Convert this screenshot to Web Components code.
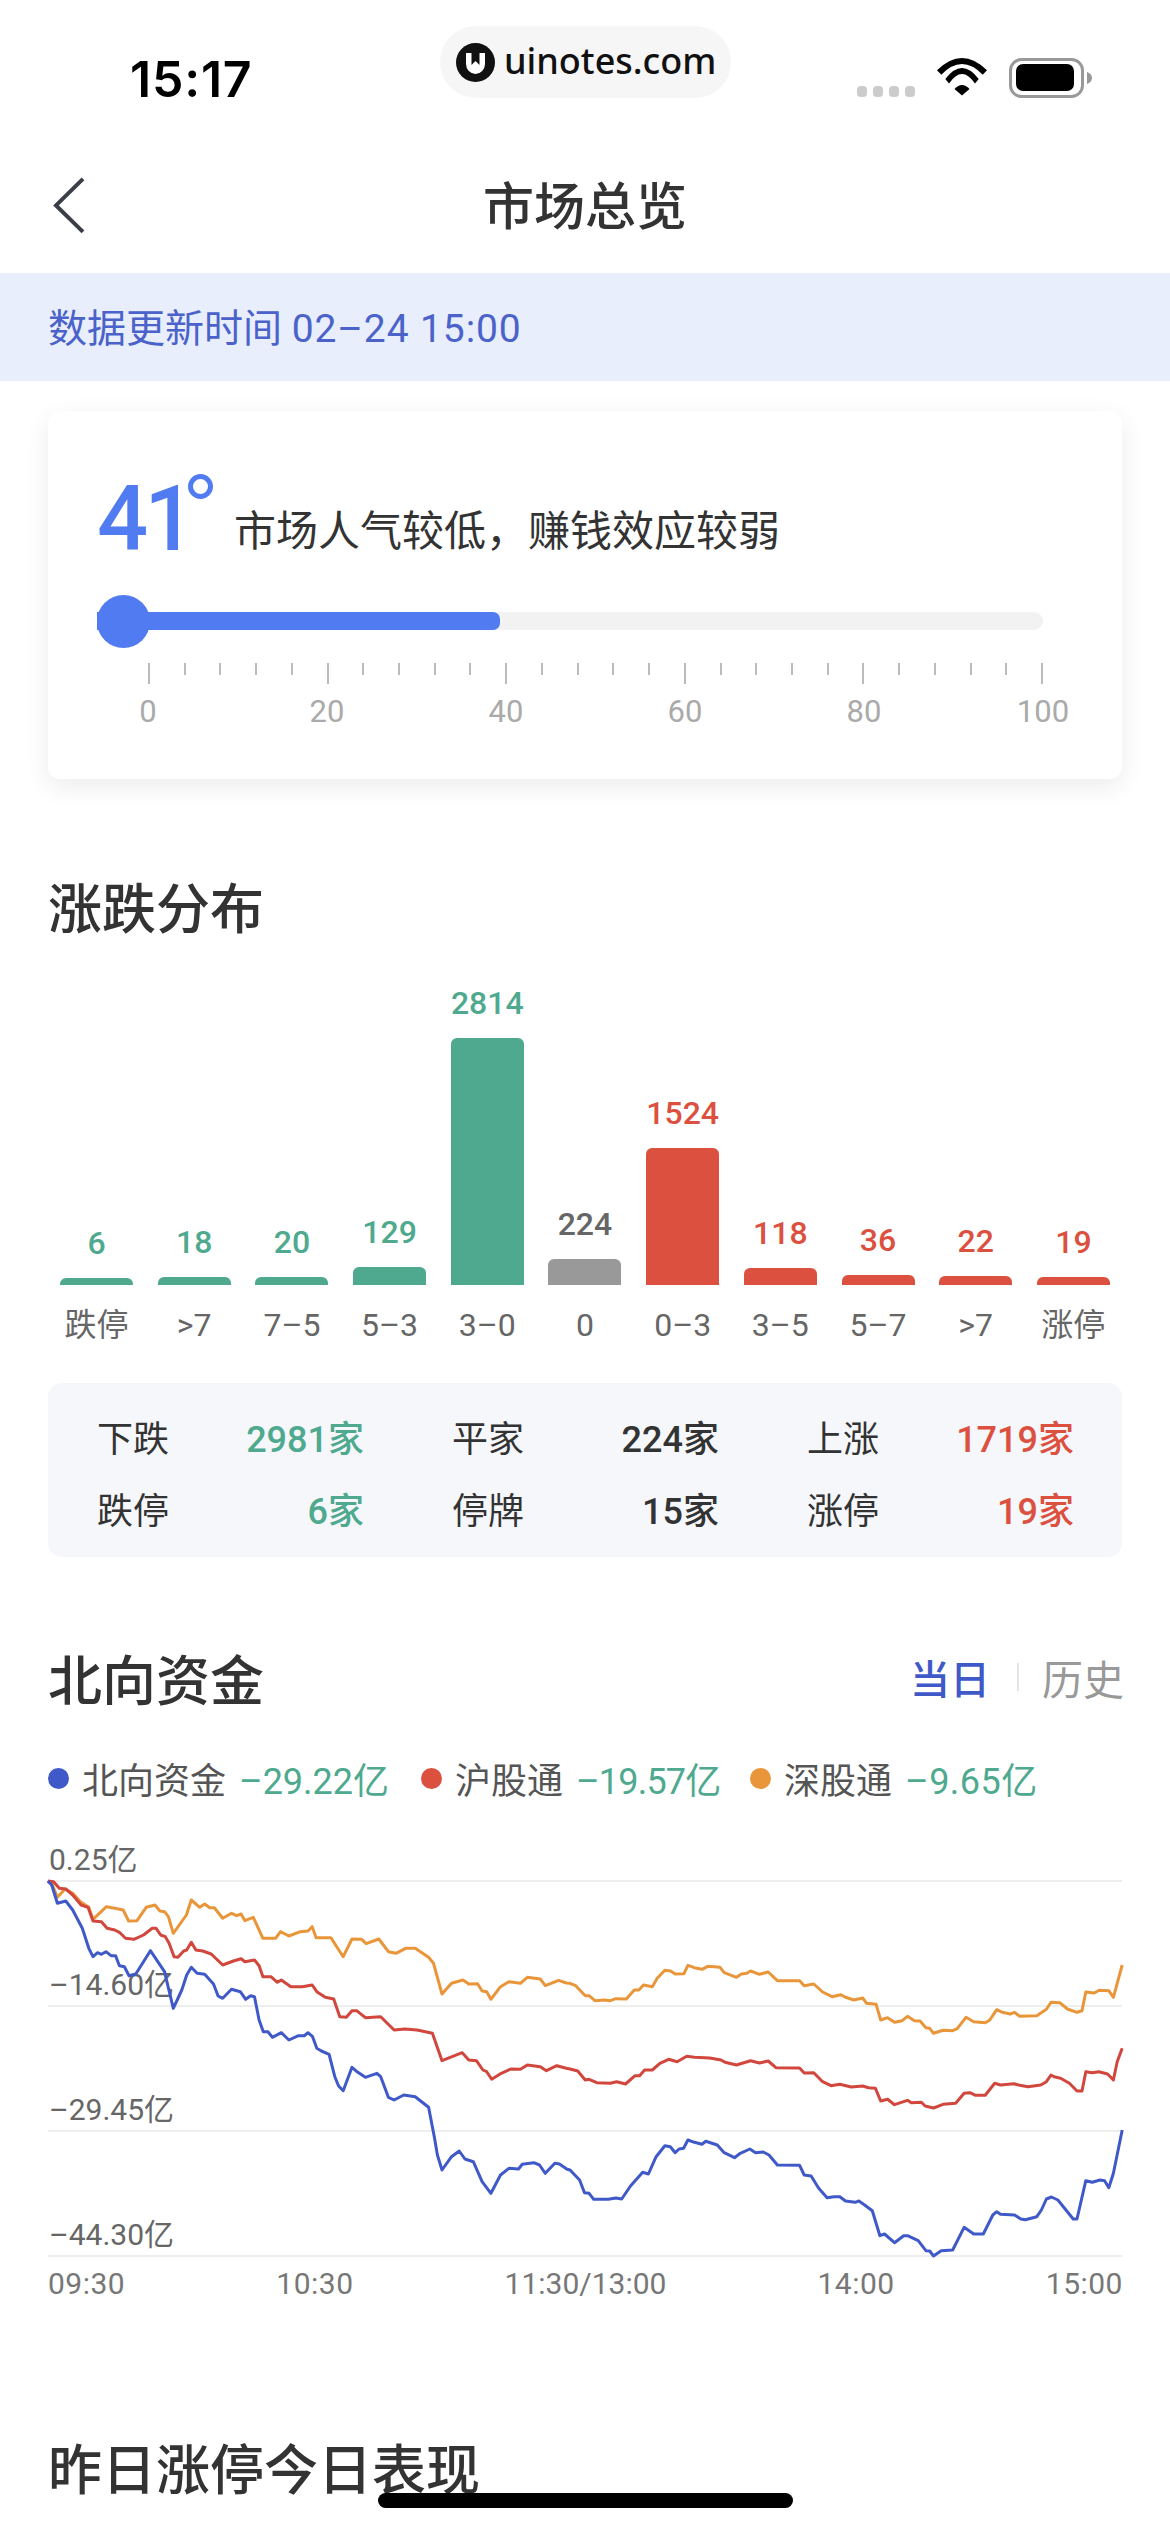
<!DOCTYPE html>
<html lang="zh-CN">
<head>
<meta charset="utf-8">
<title>市场总览</title>
<style>
  html, body { margin: 0; padding: 0; background: #fff; }
  body {
    width: 1170px; height: 2532px; overflow: hidden; position: relative;
    font-family: Roboto, "Noto Sans CJK SC", sans-serif;
    color: #333;
  }
</style>
</head>
<body>
<status-bar></status-bar>
<nav-bar>市场总览</nav-bar>
<update-banner>数据更新时间 <span style="letter-spacing:.9px">02–24 15:00</span></update-banner>
<mood-card value="41" text="市场人气较低，赚钱效应较弱"></mood-card>
<section-title style="margin-top:98px">涨跌分布</section-title>
<dist-bars></dist-bars>
<dist-summary></dist-summary>
<section-title style="margin-top:92px">北向资金<day-tabs slot="right"></day-tabs></section-title>
<flow-legend></flow-legend>
<flow-chart></flow-chart>
<section-title style="margin-top:136px">昨日涨停今日表现</section-title>
<home-bar></home-bar>

<script>
// 小工具：建一个带 shadow root 的组件
function define(tag, css, html) {
  customElements.define(tag, class extends HTMLElement {
    constructor() {
      super();
      this.attachShadow({ mode: 'open' });
    }
    connectedCallback() {
      const body = typeof html === 'function' ? html(this) : html;
      this.shadowRoot.innerHTML = `<style>${css}</style>${body}`;
    }
  });
}

const GREEN = '#4ea98f', RED = '#dc5040', BLUE = '#4059c8', ORANGE = '#e9963a';

define('status-bar', `
  :host { display: grid; grid-template-columns: 440px 291px 1fr; height: 132px; box-sizing: border-box; }
  .time { font: 600 50px Inter, sans-serif; color: #000; padding: 50px 0 0 130px; line-height: 58px; letter-spacing: .8px; }
  .pill { margin-top: 26px; height: 72px; border-radius: 36px; background: #f6f6f6; display: flex; align-items: center; box-sizing: border-box; padding-left: 16px; gap: 9px; }
  .pill span { font: 500 36px "Noto Sans", sans-serif; color: #111; margin-top: -3px; }
  .icons { display: flex; align-items: flex-start; padding: 58px 0 0 126px; }
  .dots { display: flex; gap: 6px; margin-top: 28px; }
  .dots i { width: 10px; height: 11px; border-radius: 4px; background: #ccc; }
  .wifi { margin-left: 22px; }
  .batt { margin-left: 22px; }
`, `
  <div class="time">15:17</div>
  <div class="pill">
    <svg width="39" height="39" viewBox="0 0 39 39">
      <circle cx="19.500" cy="19.500" r="19.500" fill="#111"/>
      <path d="M10 10h19v11a9.500 10 0 0 1-19 0z" fill="#fff"/>
      <path d="M15.500 10v12l4-4 4 4V10z" fill="#111"/>
    </svg>
    <span>uinotes.com</span>
  </div>
  <div class="icons">
    <div class="dots"><i></i><i></i><i></i><i></i></div>
    <svg class="wifi" width="50" height="38" viewBox="0 0 50 38">
      <path d="M0 12.300Q25-12.300 50 12.300L45.700 16.700Q25-4.700 4.300 16.700z" fill="#000"/>
      <path d="M8.300 21Q25-1 41.700 21L38 25.500Q25 6.500 12 25.500z" fill="#000"/>
      <path d="M17.500 31Q25 23 32.500 31L25 37.500z" fill="#000"/>
    </svg>
    <svg class="batt" width="84" height="40" viewBox="0 0 84 40">
      <rect x="1.500" y="1.500" width="72" height="37" rx="11" fill="none" stroke="#999" stroke-width="3"/>
      <rect x="7" y="6" width="58" height="27" rx="7" fill="#000"/>
      <path d="M78 14c3 1 5 3 5 6s-2 5-5 6z" fill="#999"/>
    </svg>
  </div>
`);

define('nav-bar', `
  :host { display: flex; align-items: center; justify-content: center; position: relative; height: 141px; font-size: 51px; font-weight: 500; color: #333; }
  svg { position: absolute; left: 50px; top: 43px; }
`, `
  <svg width="38" height="60" viewBox="0 0 38 60"><path d="M33 4L6 31l27 27" transform="scale(1 .98)" fill="none" stroke="#3a3f47" stroke-width="4"/></svg>
  <slot></slot>
`);

define('update-banner', `
  :host { display: flex; align-items: center; white-space: pre; height: 108px; box-sizing: border-box; padding: 0 0 4px 48px; background: #e8eefb; color: #4a62c9; font-size: 39px; }
`, `<div><slot></slot></div>`);

define('mood-card', `
  :host { display: block; box-sizing: border-box; margin: 30px 48px 0; height: 368px; padding: 63px 79px 0 49px; background: #fff; border-radius: 12px; box-shadow: 0 8px 26px rgba(0,0,0,.08); }
  .head { display: flex; align-items: flex-end; height: 84px; }
  .num { width: 82px; font-size: 90px; font-weight: 500; color: #517bf0; line-height: 84px; letter-spacing: -4px; position: relative; top: 4px; white-space: nowrap; }
  .deg { width: 25px; height: 25px; box-sizing: border-box; border: 5px solid #517bf0; border-radius: 50%; align-self: flex-start; margin-left: 9px; }
  .txt { font-size: 42px; margin-left: 21px; line-height: 52px; color: #333; }
  .track { position: relative; height: 18px; margin-top: 54px; border-radius: 9px; background: #f2f2f2; }
  .fill { width: 403px; height: 18px; border-radius: 0 7px 7px 0; background: #517bf0; }
  .knob { position: absolute; left: 0; top: -17px; width: 53px; height: 53px; border-radius: 50%; background: #517bf0; }
  .ticks { display: flex; justify-content: space-between; align-items: flex-start; margin: 33px 0 0 51px; height: 21px; }
  .ticks i { width: 2px; height: 12px; background: #bbb; }
  .ticks i.big { height: 21px; }
  .labels { display: flex; justify-content: space-between; margin: 10px -30px 0 21px; font-size: 31px; line-height: 36px; color: #aaa; }
  .labels span { width: 60px; text-align: center; }
`, (el) => `
  <div class="head"><div class="num">${el.getAttribute('value')}</div><div class="deg"></div><div class="txt">${el.getAttribute('text')}</div></div>
  <div class="track"><div class="fill"></div><div class="knob"></div></div>
  <div class="ticks">${Array.from({ length: 26 }, (_, i) => `<i class="${i % 5 === 0 ? 'big' : ''}"></i>`).join('')}</div>
  <div class="labels">${[0, 20, 40, 60, 80, 100].map(n => `<span>${n}</span>`).join('')}</div>
`);

define('section-title', `
  :host { display: flex; justify-content: space-between; align-items: center; padding: 0 46px 0 48px; height: 56px; font-size: 54px; font-weight: 500; color: #333; }
`, `<div><slot></slot></div><slot name="right"></slot>`);

define('day-tabs', `
  :host { display: flex; align-items: center; font-size: 40px; font-weight: 500; color: ${BLUE}; }
  i { width: 2px; height: 28px; background: #e5e5e5; margin: 0 23px 0 27px; }
  span { color: #999; font-weight: 400; font-size: 41px; }
`, `当日<i></i><span>历史</span>`);

const BARS = [
  ['6', 7, GREEN, '跌停'], ['18', 8, GREEN, '>7'], ['20', 8, GREEN, '7–5'], ['129', 18, GREEN, '5–3'],
  ['2814', 247, GREEN, '3–0'], ['224', 26, '#999', '0'], ['1524', 137, RED, '0–3'], ['118', 17, RED, '3–5'],
  ['36', 10, RED, '5–7'], ['22', 9, RED, '>7'], ['19', 8, RED, '涨停'],
];

define('dist-bars', `
  :host { display: grid; grid-template-columns: repeat(11, 73px); justify-content: space-between; margin: 46px 60px 0; height: 365px; }
  .col { display: flex; flex-direction: column; align-items: center; justify-content: flex-end; }
  .v { font-size: 32px; font-weight: 500; line-height: 38px; margin-bottom: 16px; white-space: nowrap; }
  .b { width: 73px; border-radius: 6px 6px 0 0; }
  .l { font-size: 32px; line-height: 38px; height: 38px; margin-top: 21px; color: #666; white-space: nowrap; }
  .plot { height: 306px; display: flex; flex-direction: column; align-items: center; justify-content: flex-end; }
`, BARS.map(([v, h, c, l]) => `
  <div class="col"><div class="plot"><div class="v" style="color:${c === '#999' ? '#666' : c}">${v}</div><div class="b" style="height:${h}px;background:${c}"></div></div><div class="l">${l.replace('>', '&gt;')}</div></div>
`).join(''));

define('dist-summary', `
  :host { display: grid; grid-template-columns: repeat(3, 267px); column-gap: 88px; row-gap: 32px; margin: 39px 48px 0; padding: 42px 50px 30px 49px; height: 174px; box-sizing: border-box; border-radius: 14px; background: #f5f7fb; font-size: 36px; color: #333; align-content: center; }
  .cell { display: flex; justify-content: space-between; line-height: 40px; }
  b { font-weight: 500; }
`, [
  ['下跌', '2981家', GREEN], ['平家', '224家', '#333'], ['上涨', '1719家', RED],
  ['跌停', '6家', GREEN], ['停牌', '15家', '#333'], ['涨停', '19家', RED],
].map(([k, v, c]) => `<div class="cell"><span>${k}</span><b style="color:${c}">${v}</b></div>`).join(''));

define('flow-legend', `
  :host { display: grid; grid-template-columns: 373px 329px auto; align-items: center; margin: 47px 48px 0; height: 40px; font-size: 36px; color: #555; white-space: nowrap; }
  .it { display: flex; align-items: center; }
  i { width: 21px; height: 21px; border-radius: 50%; margin-right: 13px; }
  b { font-weight: 400; color: ${GREEN}; margin-left: 13px; }
`, [
  ['北向资金', '–29.22亿', BLUE, 0], ['沪股通', '–19.57亿', RED, -.8], ['深股通', '–9.65亿', ORANGE, .5],
].map(([k, v, c, s]) => `<div class="it"><i style="background:${c}"></i>${k}<b style="letter-spacing:${s}px">${v}</b></div>`).join(''));

// 折线数据，按放大图读出的坐标 [x, y]，左半段和右半段分别换算
const LEFT_SCALE = 600 / 1568, TOP = 1820;
const toLeft = (a) => a.map(([x, y]) => [x * LEFT_SCALE, TOP + y / 3]);
const toRight = (a) => a.map(([x, y]) => [570 + x * LEFT_SCALE, TOP + y / 3]);

const ORANGE_L = [[125,185],[135,190],[150,232],[170,207],[190,220],[210,245],[232,262],[243,298],[278,260],[300,265],[322,270],[336,303],[358,302],[382,262],[405,255],[418,273],[430,275],[440,290],[453,340],[487,285],[500,240],[522,262],[535,252],[548,263],[560,263],[582,295],[605,280],[618,287],[630,282],[640,302],[662,292],[687,355],[720,355],[733,335],[755,348],[785,335],[805,333],[816,320],[826,353],[865,353],[880,380],[897,410],[920,357],[945,358],[957,371],[990,357],[1015,395],[1035,400],[1060,385],[1085,385],[1120,412],[1133,430],[1155,522],[1180,490],[1210,480],[1225,492],[1248,491],[1260,513],[1272,515],[1283,538],[1308,500],[1330,485],[1360,490],[1378,472],[1412,477],[1425,497],[1460,481],[1480,489]];
const ORANGE_R = [[0,490],[15,497],[40,527],[50,527],[65,542],[90,540],[105,542],[120,536],[147,537],[168,510],[180,510],[192,495],[215,500],[228,475],[248,451],[263,453],[275,462],[298,461],[308,436],[325,443],[345,448],[360,439],[392,442],[403,458],[435,472],[448,462],[462,460],[472,453],[495,463],[518,456],[542,482],[600,482],[612,497],[637,492],[660,516],[685,530],[708,524],[720,532],[742,540],[765,534],[775,550],[800,553],[812,600],[830,593],[848,607],[868,602],[882,589],[900,602],[915,603],[930,623],[940,625],[950,640],[975,631],[1000,632],[1012,626],[1035,592],[1055,605],[1085,608],[1097,600],[1115,569],[1130,577],[1150,582],[1162,577],[1175,589],[1220,587],[1245,568],[1257,547],[1280,548],[1300,567],[1325,577],[1338,572],[1348,516],[1370,519],[1383,511],[1408,512],[1420,532],[1443,435]];
const RED_L = [[125,183],[140,185],[155,205],[172,207],[190,225],[212,255],[230,262],[243,303],[265,305],[280,325],[300,330],[312,337],[328,355],[350,358],[375,345],[398,325],[408,325],[420,345],[432,350],[442,370],[455,410],[465,412],[480,393],[488,390],[500,367],[512,390],[530,393],[552,402],[582,435],[610,423],[630,416],[640,425],[665,420],[677,437],[687,470],[708,470],[725,487],[735,480],[760,500],[790,500],[816,495],[828,515],[850,532],[872,537],[888,590],[905,592],[920,572],[932,572],[955,593],[995,590],[1030,630],[1058,627],[1090,630],[1130,640],[1155,722],[1208,698],[1225,720],[1245,722],[1262,750],[1272,755],[1285,778],[1310,760],[1335,747],[1360,748],[1378,735],[1412,740],[1428,752],[1455,737],[1480,745]];
const RED_R = [[0,747],[20,753],[40,780],[50,778],[70,788],[105,790],[122,785],[145,792],[170,767],[182,767],[195,750],[215,750],[235,730],[258,718],[280,725],[305,709],[325,712],[365,714],[395,720],[405,727],[435,735],[450,730],[472,722],[495,729],[518,723],[538,743],[600,744],[612,759],[637,758],[660,785],[682,797],[705,793],[735,801],[765,798],[780,803],[798,805],[812,843],[830,838],[848,854],[882,841],[892,848],[918,847],[928,858],[950,864],[975,853],[1008,850],[1030,820],[1045,818],[1060,826],[1085,826],[1110,790],[1125,795],[1160,791],[1175,796],[1197,800],[1230,795],[1245,785],[1257,765],[1265,770],[1282,775],[1305,790],[1325,813],[1338,813],[1348,755],[1365,758],[1382,755],[1405,762],[1420,780],[1430,725],[1443,685]];
const BLUE_L = [[125,183],[135,195],[150,250],[172,243],[190,270],[215,325],[232,385],[243,410],[255,398],[265,403],[277,395],[290,407],[302,407],[312,437],[325,440],[337,467],[355,462],[393,392],[430,455],[453,565],[475,510],[488,465],[500,442],[515,460],[535,463],[558,492],[570,528],[582,535],[605,508],[628,515],[642,538],[655,527],[665,530],[677,600],[688,635],[700,635],[712,652],[735,638],[755,660],[780,647],[795,647],[805,638],[817,650],[828,685],[840,693],[860,703],[875,770],[885,798],[897,812],[920,742],[935,757],[955,772],[985,760],[995,770],[1015,832],[1030,840],[1055,825],[1085,830],[1120,862],[1135,950],[1143,1005],[1155,1050],[1180,1010],[1200,993],[1215,1017],[1237,1025],[1260,1085],[1283,1120],[1308,1065],[1330,1045],[1355,1047],[1365,1033],[1395,1028],[1410,1035],[1425,1060],[1450,1030],[1462,1032],[1482,1048]];
const BLUE_R = [[0,1050],[25,1080],[38,1118],[50,1120],[62,1138],[100,1138],[120,1134],[135,1137],[158,1098],[190,1057],[205,1062],[225,1010],[248,977],[262,980],[275,998],[285,987],[297,985],[308,960],[325,967],[345,973],[355,964],[385,975],[403,998],[430,1013],[445,1000],[470,987],[485,998],[505,996],[520,1005],[542,1035],[600,1036],[612,1065],[630,1068],[650,1105],[672,1133],[690,1130],[705,1130],[720,1143],[745,1147],[755,1143],[770,1155],[790,1172],[810,1247],[822,1242],[848,1268],[872,1247],[882,1247],[910,1262],[930,1292],[940,1293],[950,1308],[970,1292],[1000,1290],[1030,1222],[1055,1242],[1080,1242],[1105,1185],[1115,1175],[1125,1183],[1162,1185],[1178,1197],[1190,1199],[1220,1190],[1232,1170],[1245,1137],[1258,1131],[1275,1140],[1315,1197],[1325,1197],[1348,1082],[1365,1087],[1385,1080],[1397,1082],[1408,1103],[1420,1060],[1443,930]];

const CHART_TOP = 1842;
const linePoints = (l, r) => toLeft(l).concat(toRight(r))
  .map(([x, y]) => `${x.toFixed(1)},${(y - CHART_TOP).toFixed(1)}`).join(' ');

define('flow-chart', `
  :host { display: block; position: relative; margin-top: 50px; font-size: 30px; color: #666; }
  .row { margin: 0 48px; height: 123px; border-bottom: 2px solid #eee; display: flex; align-items: flex-end; }
  .row.first { height: 38px; }
  .row span { margin-bottom: 5px; line-height: 30px; margin-left: 1px; }
  .x { display: flex; justify-content: space-between; margin: 9px 47px 0 48px; line-height: 36px; color: #777; letter-spacing: .5px; }
  .x .wide { letter-spacing: 0; }
  svg { position: absolute; left: 0; top: 0; overflow: visible; }
  polyline { fill: none; stroke-width: 3; stroke-linejoin: round; }
`, `
  <div class="row first"><span>0.25亿</span></div>
  <div class="row"><span>–14.60亿</span></div>
  <div class="row"><span>–29.45亿</span></div>
  <div class="row"><span>–44.30亿</span></div>
  <div class="x"><span>09:30</span><span>10:30</span><span class="wide">11:30/13:00</span><span>14:00</span><span>15:00</span></div>
  <svg width="1170" height="416" viewBox="0 0 1170 416">
    <polyline stroke="${ORANGE}" points="${linePoints(ORANGE_L, ORANGE_R)}"/>
    <polyline stroke="#d2473d" points="${linePoints(RED_L, RED_R)}"/>
    <polyline stroke="${BLUE}" points="${linePoints(BLUE_L, BLUE_R)}"/>
  </svg>
`);

define('home-bar', `
  :host { position: absolute; left: 378px; top: 2493px; width: 415px; height: 15px; border-radius: 8px; background: #000; }
`, ``);
</script>
</body>
</html>
